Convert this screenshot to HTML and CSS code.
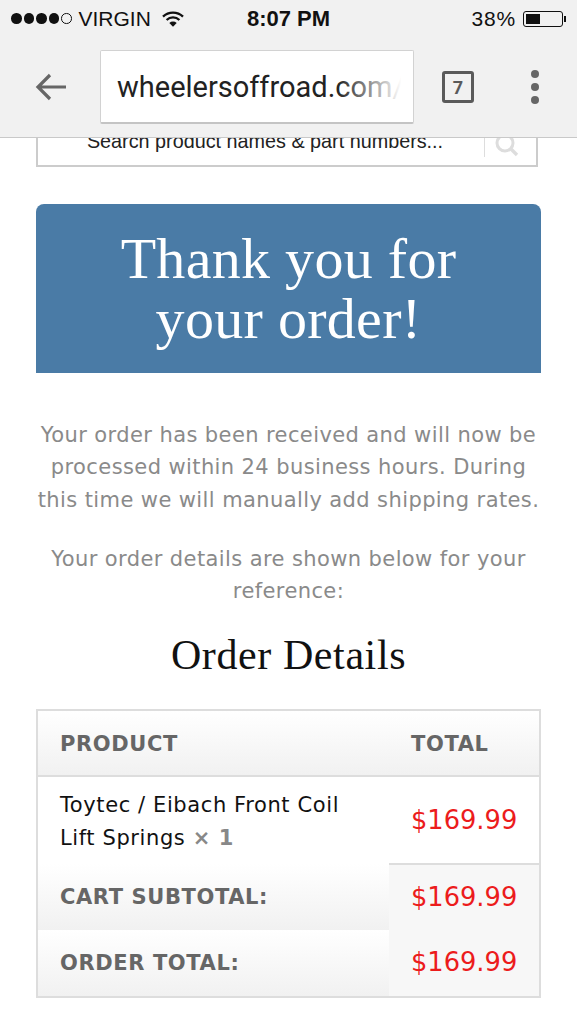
FILE: index.html
```html
<!DOCTYPE html>
<html lang="en">
<head>
    <meta charset="UTF-8">
    <meta name="viewport" content="width=device-width, initial-scale=1.0">
    <title>Thank you for your order</title>
    <link rel="stylesheet" href="styles.css">
</head>
<body>
    <header class="chrome">
        <div class="status-bar">
            <div class="status-left">
                <span class="signal">
                    <i class="dot"></i><i class="dot"></i><i class="dot"></i><i class="dot"></i><i class="dot empty"></i>
                </span>
                <span class="carrier">VIRGIN</span>
                <svg class="wifi" width="22" height="16" viewBox="0 0 22 16">
                    <path d="M1 5.6 A14.4 14.4 0 0 1 21 5.6" fill="none" stroke="#111" stroke-width="2.3"/>
                    <path d="M4.6 9 A9.2 9.2 0 0 1 17.4 9" fill="none" stroke="#111" stroke-width="2.3"/>
                    <path d="M11 15.8 L7.3 11.9 A5.4 5.4 0 0 1 14.7 11.9 Z" fill="#111"/>
                </svg>
            </div>
            <div class="clock">8:07 PM</div>
            <div class="status-right">
                <span class="percent">38%</span>
                <span class="battery"><span class="battery-level"></span></span>
                <span class="battery-tip"></span>
            </div>
        </div>
        <div class="toolbar">
            <svg class="back" width="32" height="30" viewBox="0 0 32 30">
                <path d="M32 15 H5 M16 3 L4 15 L16 27" fill="none" stroke="#666" stroke-width="3.2"/>
            </svg>
            <div class="url-box"><span class="url">wheelersoffroad.com/</span></div>
            <div class="tab-count">7</div>
            <div class="menu"><i></i><i></i><i></i></div>
        </div>
    </header>

    <main class="page">
        <div class="search">
            <div class="search-text">Search product names &amp; part numbers...</div>
            <div class="search-btn">
                <svg width="28" height="22" viewBox="0 0 28 22">
                    <circle cx="12" cy="5" r="8" fill="none" stroke="#ddd" stroke-width="3"/>
                    <path d="M18 11 L24 17" stroke="#ddd" stroke-width="3.4"/>
                </svg>
            </div>
        </div>

        <h1 class="banner">Thank you for your&nbsp;order!</h1>

        <p class="intro">Your order has been received and will now be processed within 24 business hours. During this time we will manually add shipping rates.</p>
        <p class="intro second">Your order details are shown below for your reference:</p>

        <h2 class="details-title">Order Details</h2>

        <table class="order">
            <thead>
                <tr>
                    <th>PRODUCT</th>
                    <th class="col-total">TOTAL</th>
                </tr>
            </thead>
            <tbody>
                <tr class="item">
                    <td>Toytec / Eibach Front Coil<br>Lift Springs <b class="qty">× 1</b></td>
                    <td class="price">$169.99</td>
                </tr>
                <tr class="sub">
                    <th>CART SUBTOTAL:</th>
                    <td class="price">$169.99</td>
                </tr>
                <tr class="sum">
                    <th>ORDER TOTAL:</th>
                    <td class="price">$169.99</td>
                </tr>
            </tbody>
        </table>
    </main>
</body>
</html>
```

FILE: styles.css
```css
html, body {
    margin: 0;
    padding: 0;
    background: #fff;
}
body {
    font-family: "DejaVu Sans", Verdana, sans-serif;
    height: 1024px;
    overflow: hidden;
}

/* phone + browser chrome */
.chrome {
    background: #f1f1f1;
    height: 137px;
    border-bottom: 1px solid #c9c9c9;
    position: relative;
    z-index: 2;
}
.status-bar {
    display: grid;
    grid-template-columns: 1fr auto 1fr;
    align-items: center;
    height: 37px;
    padding: 0 11px 0 11px;
    font-family: "Liberation Sans", Arial, sans-serif;
    font-size: 21px;
    color: #111;
}
.status-left, .status-right {
    display: flex;
    align-items: center;
}
.status-right {
    justify-content: flex-end;
}
.signal {
    display: flex;
    gap: 2px;
    margin-right: 7px;
}
.dot {
    width: 10.5px;
    height: 10.5px;
    border-radius: 50%;
    background: #111;
    box-sizing: border-box;
}
.dot.empty {
    background: none;
    border: 1px solid #111;
}
.carrier {
    margin-right: 11px;
}
.clock {
    font-weight: bold;
    font-size: 22px;
}
.percent {
    margin-right: 7px;
    letter-spacing: 0.8px;
}
.battery {
    width: 40px;
    height: 16px;
    border: 1px solid #111;
    border-radius: 3px;
    padding: 2px;
    box-sizing: border-box;
    display: block;
}
.battery-level {
    display: block;
    width: 14px;
    height: 100%;
    background: #111;
}
.battery-tip {
    width: 2px;
    height: 6px;
    background: #111;
    margin-left: 1px;
}
.toolbar {
    display: flex;
    align-items: center;
    height: 100px;
    padding-left: 34px;
}
.back {
    margin-right: 34px;
}
.url-box {
    width: 314px;
    height: 74px;
    box-sizing: border-box;
    margin-top: -1px;
    background: #fff;
    border: 1px solid #d2d2d2;
    border-bottom: 2px solid #c4c4c4;
    border-radius: 2px;
    padding-left: 16px;
    overflow: hidden;
    line-height: 72px;
    position: relative;
}
.url-box::after {
    content: "";
    position: absolute;
    top: 0;
    right: 0;
    bottom: 0;
    width: 76px;
    background: linear-gradient(to right, rgba(255,255,255,0), #fff 85%);
}
.url {
    font-family: Roboto, sans-serif;
    font-size: 29px;
    color: #222;
    white-space: nowrap;
}
.tab-count {
    width: 32px;
    height: 32px;
    box-sizing: border-box;
    margin-left: 28px;
    border: 3px solid #5a5a5a;
    border-radius: 3px;
    font-family: Roboto, sans-serif;
    font-weight: bold;
    font-size: 18px;
    color: #5a5a5a;
    display: flex;
    align-items: center;
    justify-content: center;
}
.menu {
    display: flex;
    flex-direction: column;
    gap: 5px;
    margin-left: 57px;
}
.menu i {
    width: 8px;
    height: 8px;
    border-radius: 50%;
    background: #666;
}

/* page content */
.page {
    padding: 0 36px;
}
.search {
    display: flex;
    height: 29px;
    margin-right: 3px;
    border: 2px solid #ccc;
    border-top: 0;
    box-sizing: border-box;
    overflow: hidden;
}
.search-text {
    flex: 1;
    font-family: "Liberation Sans", Arial, sans-serif;
    font-size: 19.8px;
    color: #222;
    text-align: center;
    line-height: 7px;
    padding-left: 8px;
    height: 27px;
    box-sizing: border-box;
}
.search-btn {
    width: 51px;
    height: 19px;
    border-left: 1px solid #ddd;
}
.search-btn svg {
    display: block;
    margin-left: 8px;
}
.banner {
    margin: 37px 0 0;
    background: #4a7ba6;
    border-radius: 8px 8px 0 0;
    color: #fff;
    font-family: "Liberation Serif", Georgia, serif;
    font-weight: normal;
    font-size: 58px;
    letter-spacing: 0.3px;
    line-height: 60px;
    text-align: center;
    padding: 25px 40px 23px;
    height: 169px;
    box-sizing: border-box;
}
.intro {
    margin: 45.5px 0 0;
    color: #8a8a8a;
    font-size: 21px;
    letter-spacing: 0.4px;
    line-height: 32.5px;
    text-align: center;
}
.intro.second {
    margin-top: 26.5px;
}
.details-title {
    margin: 22px 0 0;
    font-family: "Liberation Serif", Georgia, serif;
    font-weight: normal;
    font-size: 42px;
    letter-spacing: 0.6px;
    line-height: 50px;
    color: #111;
    text-align: center;
}
.order {
    width: 100%;
    margin-top: 29px;
    border-collapse: collapse;
    border: 2px solid #ddd;
    table-layout: fixed;
}
.order th {
    font-size: 21px;
    font-weight: bold;
    letter-spacing: 0.6px;
    color: #666;
    text-align: left;
    padding: 0 0 0 22px;
}
.order thead th {
    height: 62px;
    padding-top: 2px;
    background: linear-gradient(#fff, #f1f1f1);
    border-bottom: 2px solid #ddd;
}
.order th.col-total {
    width: 128px;
}
.item td {
    height: 83px;
    padding: 4px 0 0 22px;
    font-size: 21px;
    letter-spacing: 0.6px;
    line-height: 33px;
    color: #111;
}
.order td.price {
    height: auto;
    color: #ec1c1c;
    font-size: 25.7px;
    letter-spacing: 0;
    padding: 0 0 1px 22px;
}
.order .item td.price {
    padding: 2px 0 0 22px;
}
.qty {
    color: #888;
}
.sub th {
    height: 66px;
    background: linear-gradient(#fff, #f1f1f1);
}
.order .sum th {
    height: 65px;
    padding-top: 1px;
    background: linear-gradient(#fff, #f1f1f1);
}
.sub td.price, .sum td.price {
    background: #f7f7f7;
}
.sub td.price {
    border-top: 2px solid #ddd;
}
```
